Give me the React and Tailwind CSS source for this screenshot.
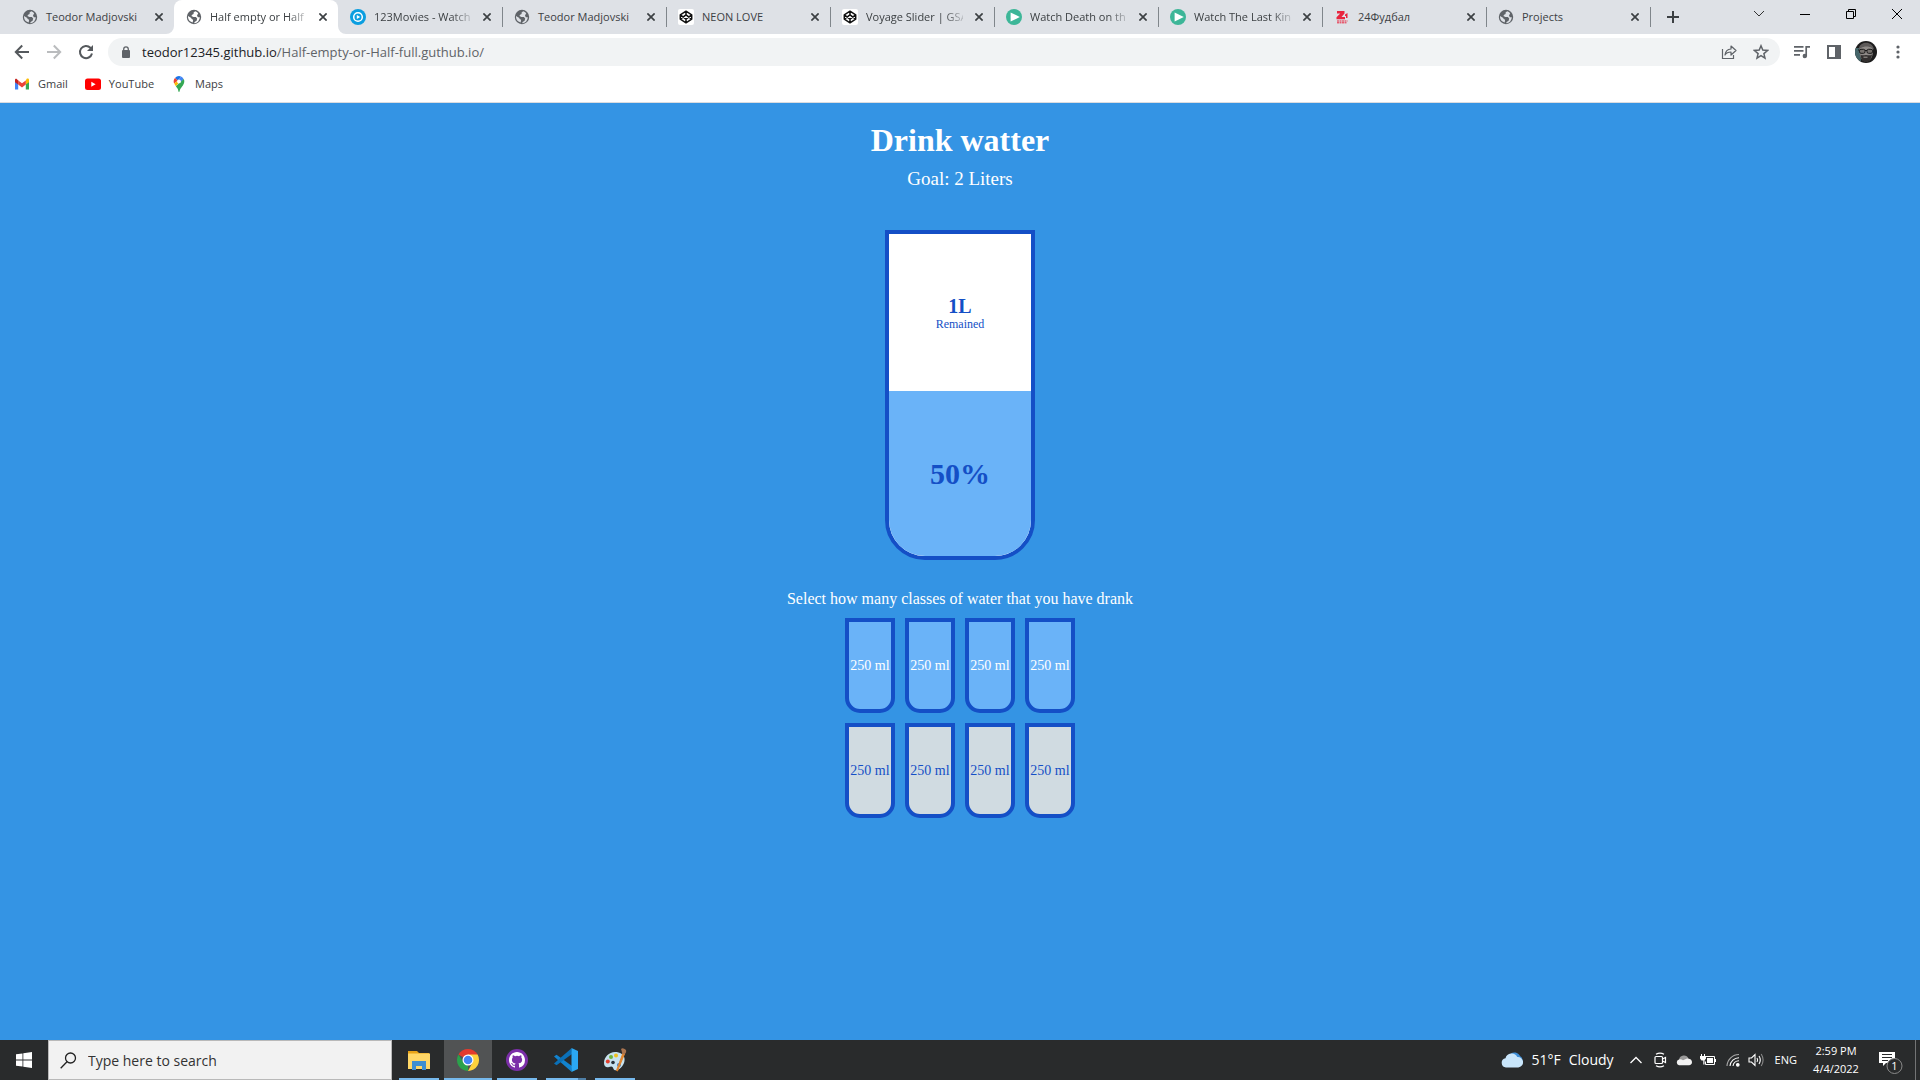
const Globe = () => (
  <svg viewBox="0 0 16 16" className="size-4">
    <path fillRule="evenodd" d="M8 .8a7.200 7.200 0 1 0 0 14.400A7.200 7.200 0 0 0 8 .8zM9.200 2.200 7.600 3.600v1.500l-1.500.6-.7 1.400 2 .9 2.500.1 1.300 1.500-.6 2.200-2 1.200-.4 1.300a6 6 0 0 0 5.600-6h-2L11 6.600l1.200-2.300A6 6 0 0 0 9.200 2.200zM2 7.100l3.300 1.800.3 1.200 1.500.7-.4 2.600A6 6 0 0 1 2 7.100z" fill="#5f6368" />
  </svg>
);

const CodePen = () => (
  <span className="grid size-4 place-items-center rounded-[2px] bg-white">
    <svg viewBox="0 0 16 16" className="size-4" fill="none" stroke="#111" strokeWidth="1.500" strokeLinejoin="round">
      <path d="M8 2.200 13.700 5.800v4.400L8 13.800 2.300 10.200V5.800zM8 2.200v3.700M8 10.100v3.700M2.300 5.800 8 10.100l5.700-4.300M2.300 10.200 8 5.900l5.700 4.300" />
    </svg>
  </span>
);

const BluePlay = () => (
  <svg viewBox="0 0 16 16" className="size-4">
    <circle cx="8" cy="8" r="8" fill="#0b9ee0" />
    <circle cx="8" cy="8" r="4.300" fill="none" stroke="#fff" strokeWidth="1.500" />
    <path d="M6.800 5.900v4.200L10.200 8z" fill="#fff" />
  </svg>
);

const GreenPlay = () => (
  <svg viewBox="0 0 16 16" className="size-4">
    <circle cx="8" cy="8" r="8" fill="#3db698" />
    <path d="M4.600 3.400v9.200L13.800 8z" fill="#fff" />
  </svg>
);

const Football = () => (
  <svg viewBox="0 0 16 16" className="size-4">
    <path d="M3 2h7.500v2.500L7.500 8H11v2.300H2.500V8.200L6.200 4.600H3zM11 5.500 13.500 4v5H12V7h-1z" fill="#e8253f" />
    <path d="M3 12h10.500M3 13.800h10" stroke="#e8253f" strokeWidth="1" strokeDasharray="2 .5" />
  </svg>
);

const tabs = [
  { title: 'Teodor Madjovski', Icon: Globe },
  { title: 'Half empty or Half', Icon: Globe, active: true, fade: true },
  { title: '123Movies - Watch', Icon: BluePlay, fade: true },
  { title: 'Teodor Madjovski', Icon: Globe, line: true },
  { title: 'NEON LOVE', Icon: CodePen, line: true },
  { title: 'Voyage Slider | GSA', Icon: CodePen, line: true, fade: true },
  { title: 'Watch Death on th', Icon: GreenPlay, line: true, fade: true },
  { title: 'Watch The Last Kin', Icon: GreenPlay, line: true, fade: true },
  { title: '24Фудбал', Icon: Football, line: true },
  { title: 'Projects', Icon: Globe, line: true, end: true },
];

function Tab({ title, Icon, active, line, end, fade }) {
  return (
    <div className={'relative flex h-[34px] w-[164px] shrink-0 items-center pl-3 ' + (active ? 'rounded-t-lg bg-white' : '')}>
      {line && <span className="absolute left-0 top-[7px] h-5 w-px bg-[#80868b]" />}
      {end && <span className="absolute -right-px top-[7px] h-5 w-px bg-[#80868b]" />}
      {active && (
        <>
          <svg viewBox="0 0 8 8" className="absolute -left-2 bottom-0 size-2"><path d="M8 0v8H0a8 8 0 0 0 8-8z" fill="#fff" /></svg>
          <svg viewBox="0 0 8 8" className="absolute -right-2 bottom-0 size-2"><path d="M0 0v8h8a8 8 0 0 1-8-8z" fill="#fff" /></svg>
        </>
      )}
      <button className="flex items-center gap-2 text-left">
        <Icon />
        <span className={'w-[97px] whitespace-nowrap ' + (fade ? '[mask-image:linear-gradient(to_right,#000_80%,#0003)]' : '')}>{title}</span>
      </button>
      <button aria-label={'Close ' + title} className="ml-2 grid size-4 place-items-center">
        <svg viewBox="0 0 8 8" className="size-2" stroke="#3c4043" strokeWidth="1.700"><path d="m.4.400 7.200 7.200M7.600.400.400 7.600" /></svg>
      </button>
    </div>
  );
}

function TabStrip() {
  return (
    <div className="flex h-[34px] bg-[#dee1e6] pl-[10px] text-[11px] text-[#3c4043]">
      {tabs.map((t, i) => <Tab key={i} {...t} />)}
      <button aria-label="New tab" className="ml-[9px] grid w-7 place-items-center">
        <svg viewBox="0 0 12 12" className="size-3" stroke="#3c4043" strokeWidth="2"><path d="M6 0v12M0 6h12" /></svg>
      </button>
      <div className="ml-auto flex h-7 items-center">
        <button aria-label="Search tabs" className="grid w-[46px] place-items-center">
          <svg viewBox="0 0 12 8" className="h-2 w-3" fill="none" stroke="#333"><path d="m1 1 5 5 5-5" /></svg>
        </button>
        <button aria-label="Minimize" className="grid w-[46px] place-items-center">
          <svg viewBox="0 0 10 10" className="size-[10px]" stroke="#000"><path d="M0 5.500h10" /></svg>
        </button>
        <button aria-label="Restore" className="grid w-[46px] place-items-center">
          <svg viewBox="0 0 10 10" className="size-[10px]" fill="none" stroke="#000"><path d="M.5 2.500h7v7h-7zM2.500 2.500v-2h7v7h-2" /></svg>
        </button>
        <button aria-label="Close" className="grid w-[46px] place-items-center">
          <svg viewBox="0 0 10 10" className="size-[10px]" stroke="#000"><path d="m0 0 10 10M10 0 0 10" /></svg>
        </button>
      </div>
    </div>
  );
}

function Toolbar() {
  return (
    <div className="flex h-9 items-center bg-white px-[14px]">
      <button aria-label="Back">
        <svg viewBox="0 0 16 16" className="size-4" fill="none" stroke="#55595d" strokeWidth="2"><path d="M15 8H2.500M8.200 1.500 1.800 8l6.400 6.500" /></svg>
      </button>
      <button aria-label="Forward" className="ml-4">
        <svg viewBox="0 0 16 16" className="size-4" fill="none" stroke="#babcbe" strokeWidth="2"><path d="M1 8h12.500M7.800 1.500 14.200 8l-6.400 6.500" /></svg>
      </button>
      <button aria-label="Reload" className="ml-4">
        <svg viewBox="0 0 16 16" className="size-4" fill="none" stroke="#55595d" strokeWidth="2"><path d="M14 9.500A6.100 6.100 0 1 1 12.400 3.700L14 5.400" /><path d="M15 1v6H9z" fill="#55595d" stroke="none" /></svg>
      </button>
      <div className="ml-[14px] flex h-7 flex-1 items-center rounded-full bg-[#f1f3f4] pl-[14px] pr-[11px]">
        <svg viewBox="0 0 8 12" className="h-3 w-2"><path d="M1.700 5V3.200a2.300 2.300 0 0 1 4.600 0V5" fill="none" stroke="#5f6368" strokeWidth="1.300" /><rect y="4" width="8" height="8" rx="1" fill="#5f6368" /></svg>
        <a href="#" className="ml-3 whitespace-nowrap text-[13px] leading-5 text-[#5f6368]"><span className="text-[#202124]">teodor12345.github.io</span>/Half-empty-or-Half-full.guthub.io/</a>
        <button aria-label="Share" className="ml-auto">
          <svg viewBox="0 0 16 16" className="size-4" fill="none" stroke="#5f6368" strokeWidth="1.200"><path d="M1.500 5v9.500h11V11" /><path d="M4 11c.5-4 2.500-5.800 6-6V2l5 4.500L10 11V8c-3 0-4.800 1-6 3z" strokeLinejoin="round" /></svg>
        </button>
        <button aria-label="Bookmark this page" className="ml-4">
          <svg viewBox="0 0 16 16" className="size-4" fill="none" stroke="#5f6368" strokeWidth="1.500"><path d="m8 1.800 1.800 4.300 4.700.4-3.600 3.100 1.100 4.500L8 11.700l-4 2.400 1.100-4.500L1.500 6.500l4.700-.4z" /></svg>
        </button>
      </div>
      <button aria-label="Media controls" className="ml-[14px]">
        <svg viewBox="0 0 16 16" className="size-4" fill="none" stroke="#5f6368" strokeWidth="1.700"><path d="M0 2.800h9.500M0 6.800h9.500M0 10.800h6M12.200 12.500V2.800H16" /><circle cx="10.800" cy="12" r="2.200" fill="#5f6368" stroke="none" /></svg>
      </button>
      <button aria-label="Side panel" className="ml-4">
        <svg viewBox="0 0 16 16" className="size-4" fill="#5f6368"><path d="M1 1h14v14H1zM3 3v10h6V3z" fillRule="evenodd" /></svg>
      </button>
      <button aria-label="Profile" className="ml-[13px]">
        <svg viewBox="0 0 22 22" className="size-[22px] rounded-full">
          <rect width="22" height="22" fill="#1c1c1c" />
          <path d="M0 7h5l1 13H0z" fill="#46666a" />
          <path d="M4.500 9c0-5 3-6.500 6.500-6.500s7 2 7 7-2 11-7 11-6.500-6-6.500-11.500z" fill="#8f8b88" />
          <path d="M4 8c0-8 14-9 15 1L17 7c-3-2-8-2-11 0z" fill="#5d5a59" />
          <path d="M5.500 13.500c1.500 1.500 3.500.5 5.500.5s4 1 6-.5c-.5 5-3 7.500-6 7.500s-5-2.500-5.500-7.500z" fill="#33302f" />
          <path d="M8.500 16.200h4" stroke="#a39d99" />
          <rect x="4.500" y="8.300" width="5.500" height="4" rx="1.500" fill="#77736f" stroke="#1a1a1a" />
          <rect x="12" y="8.300" width="5.500" height="4" rx="1.500" fill="#77736f" stroke="#1a1a1a" />
          <path d="M10 9.500h2M3 9h1.500M17.500 9H19" stroke="#1a1a1a" />
        </svg>
      </button>
      <button aria-label="Menu" className="ml-[13px]">
        <svg viewBox="0 0 16 16" className="size-4" fill="#5f6368"><circle cx="8" cy="3" r="1.600" /><circle cx="8" cy="8" r="1.600" /><circle cx="8" cy="13" r="1.600" /></svg>
      </button>
    </div>
  );
}

function Bookmarks() {
  return (
    <nav className="flex h-[33px] items-center border-b border-[#dadce0] bg-white pb-1 pl-[14px] text-[11px] text-[#3c4043]">
      <a href="#" className="flex items-center gap-2">
        <svg viewBox="0 0 16 16" className="size-4">
          <path d="M1 4v9.500h3.200V7z" fill="#4285f4" /><path d="M15 4v9.500h-3.200V7z" fill="#34a853" />
          <path d="M11.800 4.400V8.600L15 6.200V4c0-1.500-1.400-1.700-2.300-1.200z" fill="#fbbc04" />
          <path d="M4.200 4.400 8 7.300l3.800-2.900v4.200L8 11.500 4.200 8.600z" fill="#ea4335" />
          <path d="M1 4v2.200l3.200 2.400V4.400L3 3.200C2 2.300 1 2.900 1 4z" fill="#c5221f" />
        </svg>
        Gmail
      </a>
      <a href="#" className="ml-[17px] flex items-center gap-2">
        <svg viewBox="0 0 16 16" className="size-4"><rect y="2.500" width="16" height="11.500" rx="2.500" fill="#f00" /><path d="M6.300 5.800v4.900l4.300-2.450z" fill="#fff" /></svg>
        YouTube
      </a>
      <a href="#" className="ml-[17px] flex items-center gap-2">
        <svg viewBox="0 0 16 16" className="size-4">
          <path d="M8 0a5.300 5.300 0 0 0-4 1.900l3 2.500L10 .5A5 5 0 0 0 8 0z" fill="#1a73e8" />
          <path d="M4 1.900a5.300 5.300 0 0 0-.8 5.700L7 4.400z" fill="#ea4335" />
          <path d="M10 .4 6.600 4.400a1.900 1.900 0 0 0 2.800 2.400l3.200-3.900A5.500 5.500 0 0 0 10 .400z" fill="#4285f4" />
          <path d="M3.200 7.600c.3.900 1 1.700 1.700 2.600l4.600-5.400L6.600 4.700z" fill="#fbbc04" />
          <path d="M12.700 2.900 4.900 10.200C6.500 12.200 7.200 13.500 7.400 15.200c.1 1 1.100 1 1.200 0C9 12 13.300 9.500 13.300 5.300c0-.9-.2-1.700-.6-2.400z" fill="#34a853" />
          <circle cx="8" cy="5.400" r="1.900" fill="#fff" />
        </svg>
        Maps
      </a>
    </nav>
  );
}

function SmallCup({ full }) {
  return (
    <button className={'flex h-[95px] w-[50px] items-center justify-center whitespace-nowrap rounded-b-[15px] border-4 border-[#144fc6] text-[14px] ' + (full ? 'bg-[#6ab3f8] text-white' : 'bg-[#d0dbe1] text-[#144fc6]')}>
      250 ml
    </button>
  );
}

function Page() {
  return (
    <main className="flex flex-1 flex-col items-center bg-[#3494e4] pt-[19px] font-['Liberation_Serif',serif] text-white">
      <h1 className="text-[32px] font-bold leading-9">Drink watter</h1>
      <h3 className="mt-[10px] text-[19px] leading-[22px]">Goal: 2 Liters</h3>
      <div className="mt-10 flex h-[330px] w-[150px] flex-col overflow-hidden rounded-b-[40px] border-4 border-[#144fc6] bg-white text-[#144fc6]">
        <div className="flex flex-1 flex-col items-center justify-center">
          <span className="text-[20px] font-bold leading-[22px]">1L</span>
          <small className="text-[12px] leading-[14px]">Remained</small>
        </div>
        <div className="flex h-[165px] items-center justify-center bg-[#6ab3f8] text-[30px] font-bold">50%</div>
      </div>
      <p className="mt-[30px] text-[16px] leading-[18px]">Select how many classes of water that you have drank</p>
      <div className="mt-[10px] grid grid-cols-4 gap-[10px]">
        {Array.from({ length: 8 }, (_, i) => <SmallCup key={i} full={i < 4} />)}
      </div>
    </main>
  );
}

const Explorer = () => (
  <svg viewBox="0 0 24 24" className="size-6">
    <path d="M1 3h9l2 2h10v5H1z" fill="#e8a317" /><path d="M1 5.500h22V21H1z" fill="#ffd767" />
    <path d="M5 13h14v9h-4v-4H9v4H5z" fill="#3e8ed0" />
  </svg>
);
const Chrome = () => (
  <svg viewBox="0 0 24 24" className="size-6">
    <path d="M12 12 2.400 6.500A11.100 11.100 0 0 1 21.600 6.500z" fill="#e33b2e" />
    <path d="M12 12 12 23.100A11.100 11.100 0 0 1 2.400 6.500L7.500 14.500z" fill="#2ba14b" />
    <path d="M12 6.500h9.600A11.100 11.100 0 0 1 12 23.100l4.500-8.500z" fill="#fdd23c" />
    <circle cx="12" cy="12" r="5.500" fill="#fff" /><circle cx="12" cy="12" r="4.300" fill="#4285f4" />
  </svg>
);
const GitHub = () => (
  <svg viewBox="0 0 24 24" className="size-6">
    <circle cx="12" cy="12" r="11" fill="#7b2fa8" />
    <g transform="translate(4 4)"><path fill="#fff" d="M8 0C3.580 0 0 3.580 0 8c0 3.540 2.290 6.530 5.470 7.590.4.070.55-.17.55-.38 0-.19-.01-.82-.01-1.490-2.010.37-2.530-.49-2.690-.94-.09-.23-.48-.94-.82-1.130-.28-.15-.68-.52-.01-.53.63-.01 1.080.58 1.230.82.72 1.210 1.870.87 2.330.66.070-.52.28-.87.51-1.070-1.780-.2-3.640-.89-3.640-3.950 0-.87.31-1.590.82-2.150-.08-.2-.36-1.020.08-2.120 0 0 .67-.21 2.200.82a7.600 7.600 0 0 1 4 0c1.530-1.040 2.200-.82 2.200-.82.44 1.100.16 1.920.08 2.120.51.56.82 1.270.82 2.150 0 3.070-1.870 3.750-3.650 3.950.29.25.54.73.54 1.480 0 1.070-.01 1.930-.01 2.200 0 .21.15.46.55.38A8 8 0 0 0 16 8c0-4.420-3.580-8-8-8z" /></g>
  </svg>
);
const Code = () => (
  <svg viewBox="0 0 24 24" className="size-6">
    <path d="M0 8.500 2.500 6.800 18 18l-.5 5.800z" fill="#1283cf" />
    <path d="M17.500.2 18 6 2.500 17.200 0 15.500z" fill="#0a70b8" />
    <path d="M17.500 0 24 3v18l-6.500 3z" fill="#2ba8f2" />
  </svg>
);
const Paint = () => (
  <svg viewBox="0 0 24 24" className="size-6">
    <path d="M12 4C6 4 1 9 1 15c0 4 3 5 5 4 3-1.500 4 0 4.500 2 1 2 4 1.500 6.500-.5 3-2.500 5-6 4.500-10C21 6.500 17 4 12 4z" fill="#c7e2ef" />
    <circle cx="8" cy="9" r="2" fill="#6db33f" /><circle cx="13" cy="7.500" r="2" fill="#f0c020" /><circle cx="4.800" cy="13.500" r="2" fill="#e0402f" />
    <circle cx="10" cy="14.500" r="1.800" fill="#27313a" /><circle cx="16" cy="17" r="2" fill="#3979c6" />
    <path d="m20 5 1.500 1-7 17-1-.5z" fill="#e2862e" stroke="#e2862e" /><path d="M18 1c2-1.500 3 0 5 1 .5 2 0 4-2.500 4.500C18.500 5 19 3 18 1z" fill="#a9744f" />
  </svg>
);

const apps = [
  { name: 'File Explorer', Icon: Explorer },
  { name: 'Google Chrome', Icon: Chrome, active: true },
  { name: 'GitHub Desktop', Icon: GitHub },
  { name: 'Visual Studio Code', Icon: Code, stacked: true },
  { name: 'Paint', Icon: Paint },
];

function Taskbar() {
  return (
    <footer className="flex h-10 items-center bg-[#292b2c] text-white">
      <button aria-label="Start" className="grid h-10 w-12 shrink-0 place-items-center">
        <svg viewBox="0 0 16 16" className="size-4" fill="#fff"><path d="M0 2.300 6.500 1.400v6.200H0zM7.300 1.200 16 0v7.600H7.300zM0 8.400h6.500v6.200L0 13.700zM7.300 8.400H16V16l-8.700-1.200z" /></svg>
      </button>
      <label className="flex h-10 w-[344px] items-center border border-[#b9b9b9] bg-[#f2f2f2] pl-[11px]">
        <svg viewBox="0 0 17 17" className="size-[17px]" fill="none" stroke="#222" strokeWidth="1.300"><circle cx="10.500" cy="6" r="5" /><path d="m7 9.800-6.300 6.500" /></svg>
        <input aria-label="Search" placeholder="Type here to search" className="ml-[11px] min-w-0 flex-1 bg-transparent text-[14px] text-[#333] outline-none placeholder:text-[#333]" />
      </label>
      <div className="ml-[3px] flex gap-px">
        {apps.map(({ name, Icon, active, stacked }) => (
          <button key={name} aria-label={name} className={'relative grid h-10 w-12 place-items-center ' + (active ? 'bg-[#515354]' : '')}>
            <Icon />
            <span className={'absolute bottom-0 flex h-0.5 bg-[#76b9ed] ' + (active ? 'inset-x-0' : 'inset-x-1')}>
              {stacked && <span className="ml-auto h-0.5 w-2 bg-[#4f7fa6]" />}
            </span>
          </button>
        ))}
      </div>
      <div className="ml-auto flex items-center">
        <button className="flex items-center text-[14px] leading-5">
          <svg viewBox="0 0 22 16" className="h-4 w-[22px]"><path d="M9 2.500A6 6 0 0 1 19 4a5 5 0 0 1 1 8z" fill="#3f8fd8" /><path d="M5 15.500a4.700 4.700 0 0 1-.5-9.300A6.300 6.300 0 0 1 16.300 5a5.200 5.200 0 0 1 1 10.500z" fill="#c9e6fb" /></svg>
          <span className="ml-2">51°F</span>
          <span className="ml-2">Cloudy</span>
        </button>
        <button aria-label="Show hidden icons" className="ml-4"><svg viewBox="0 0 12 8" className="h-2 w-3" fill="none" stroke="#fff" strokeWidth="1.300"><path d="m.5 7 5.500-5.500L11.500 7" /></svg></button>
        <button aria-label="Meet Now" className="ml-[10px]">
          <svg viewBox="0 0 16 16" className="size-4" fill="none" stroke="#fff" strokeWidth="1.200"><rect x="3" y="4.500" width="7.500" height="7" rx="1" /><path d="m10.500 7 3-1.500v5L10.500 9M4 2.200Q8 0 12 2.200M4 13.800Q8 16 12 13.800" /></svg>
        </button>
        <button aria-label="OneDrive" className="ml-2">
          <svg viewBox="0 0 16 16" className="size-4"><path d="M3 7.500A5 5 0 0 1 12.500 6.500L8 12z" fill="#9a9a9a" /><path d="M3 13.200a3 3 0 0 1 0-5.800c1.500-.4 3 0 4 .8l4-1.700c2.500 0 5 1 5 3.700 0 1.600-1.200 3-3 3z" fill="#f2f2f2" /></svg>
        </button>
        <button aria-label="Battery" className="ml-2">
          <svg viewBox="0 0 16 16" className="size-4"><path d="M5.500 4.500h9v8h-9v-3" fill="none" stroke="#fff" /><path d="M7 6h6v5H7zM15 7h1v3h-1zM0 4h6v2.500L4.500 8.500v4h-1.200v-4H1.500L0 6.500zM1 2h1v2H1zM4 2h1v2H4z" fill="#fff" /></svg>
        </button>
        <button aria-label="Network" className="ml-[10px]">
          <svg viewBox="0 0 14 14" className="size-[14px]" fill="none" stroke="#fff" strokeWidth="1.100"><path d="M1 13A12 12 0 0 1 13 1.500" stroke="#aaa" /><path d="M4 13A9 9 0 0 1 13 4.700M7 13A6 6 0 0 1 13 7.800" /><circle cx="11.800" cy="11.800" r="1.300" fill="#fff" /></svg>
        </button>
        <button aria-label="Volume" className="ml-2">
          <svg viewBox="0 0 17 14" className="h-[14px] w-[17px]" fill="none" stroke="#fff" strokeWidth="1.100"><path d="M1 5h2.500L7 1.500v11L3.500 9H1zM9 5q1.300 2 0 4M11 3q2.600 4 0 8" /><path d="M13.200 1q3.800 6 0 12" stroke="#888" /></svg>
        </button>
        <button className="ml-[10px] text-[11px]">ENG</button>
        <button className="ml-3 w-[54px] whitespace-nowrap text-center text-[11px] leading-[18px]"><span className="block">2:59 PM</span><span className="block">4/4/2022</span></button>
        <button aria-label="Notifications" className="relative ml-4 mr-[10px]">
          <svg viewBox="0 0 26 28" className="h-7 w-[26px]"><path d="M0 6h16v11H7l-3 3v-3H0z" fill="#fff" /><path d="M3 8.500h10M3 11.500h10M3 14.500h6" stroke="#292b2c" /><circle cx="15.500" cy="20" r="7.500" fill="#292b2c" stroke="#8a8a8a" /></svg>
          <span className="absolute left-[8px] top-3 w-[15px] text-center text-[11px] leading-4">1</span>
        </button>
        <span className="mr-1 h-10 w-px bg-[#737475]" />
      </div>
    </footer>
  );
}

export default function App() {
  return (
    <div className="flex min-h-screen flex-col font-['Open_Sans',sans-serif]">
      <header>
        <TabStrip />
        <Toolbar />
        <Bookmarks />
      </header>
      <Page />
      <Taskbar />
    </div>
  );
}
